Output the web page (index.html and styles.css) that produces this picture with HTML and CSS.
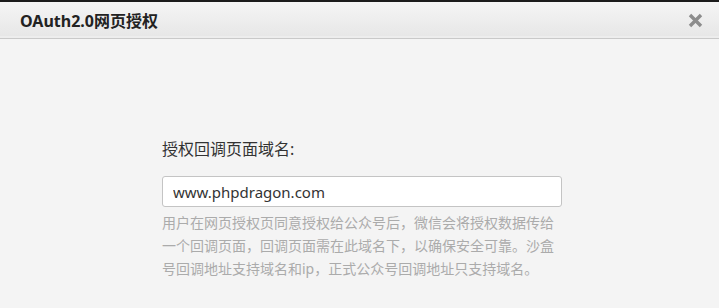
FILE: index.html
```html
<!DOCTYPE html>
<html lang="zh-CN">
<head>
  <meta charset="UTF-8">
  <title>OAuth2.0网页授权</title>
  <link rel="stylesheet" href="styles.css">
</head>
<body>
  <div class="dialog">
    <div class="dialog-head">
      <h3>OAuth2.0网页授权</h3>
      <span class="close">
        <svg width="15" height="15" viewBox="0 0 15 15">
          <path d="M2 2 L13 13 M13 2 L2 13" stroke="#8c8c8c" stroke-width="3.4" stroke-linecap="butt"/>
        </svg>
      </span>
    </div>

    <div class="dialog-body">
      <div class="field">
        <label>授权回调页面域名:</label>
        <input class="domain-input" type="text" value="www.phpdragon.com" />
        <p class="tips">用户在网页授权页同意授权给公众号后，微信会将授权数据传给一个回调页面，回调页面需在此域名下，以确保安全可靠。沙盒号回调地址支持域名和ip，正式公众号回调地址只支持域名。</p>
      </div>
    </div>
  </div>
</body>
</html>
```

FILE: styles.css
```css
* {
  margin: 0;
  padding: 0;
  box-sizing: border-box;
  font-family: 'Noto Sans', 'Noto Sans CJK SC', sans-serif;
}

html, body {
  width: 100%;
  height: 100%;
  background: #f4f4f4;
  overflow: hidden;
}

.dialog {
  height: 100vh;
  border-top: 2px solid #1c1c1c;
  background: #f4f4f4;
}

.dialog-head {
  height: 37px;
  display: flex;
  align-items: center;
  justify-content: space-between;
  padding: 0 16px 0 20px;
  background: linear-gradient(to bottom, #f5f5f5, #e6e6e6);
  border-bottom: 1px solid #c9c9c9;
  box-shadow: inset 0 -2px 0 #ededed;
}

.dialog-head h3 {
  font-size: 16px;
  font-weight: bold;
  color: #222;
  margin-top: -1px;
}

.close {
  display: flex;
  width: 15px;
  height: 15px;
  margin-top: 1px;
  cursor: pointer;
}

.dialog-body {
  display: flex;
  padding: 99px 0 0 162px;
}

.field {
  width: 400px;
}

.field label {
  display: block;
  font-size: 16px;
  color: #333;
  line-height: 22px;
  margin-bottom: 16px;
}

.domain-input {
  display: block;
  width: 400px;
  height: 31px;
  padding: 0 10px;
  border: 1px solid #c4c4c4;
  border-radius: 3px;
  background: #fff;
  font-size: 15px;
  color: #333;
  outline: none;
}

.tips {
  margin-top: 4px;
  font-size: 14px;
  line-height: 23px;
  color: #ababab;
}
```
